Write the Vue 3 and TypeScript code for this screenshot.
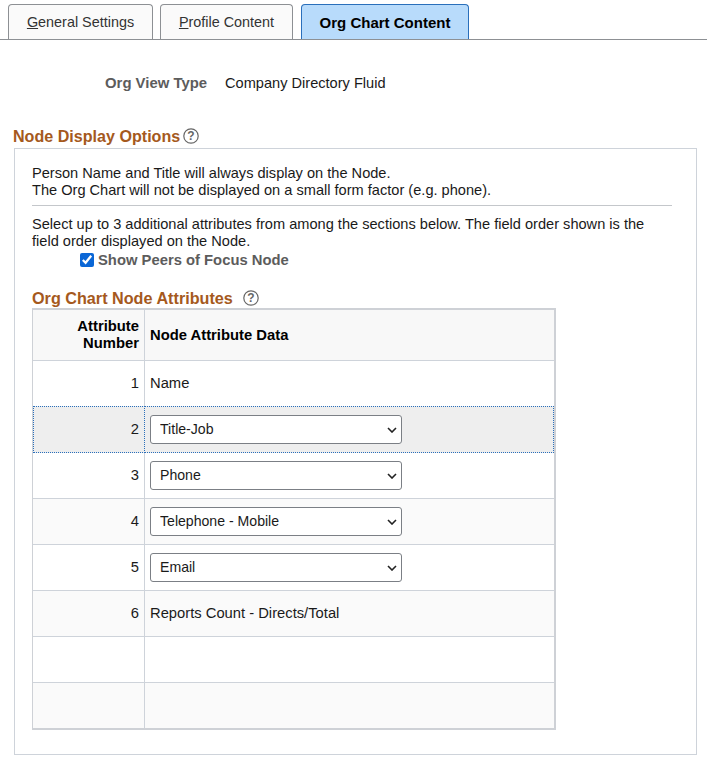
<script setup lang="ts">
interface Row { num: string; text?: string; select?: string }
const rows: Row[] = [
  { num: '1', text: 'Name' },
  { num: '2', select: 'Title-Job' },
  { num: '3', select: 'Phone' },
  { num: '4', select: 'Telephone - Mobile' },
  { num: '5', select: 'Email' },
  { num: '6', text: 'Reports Count - Directs/Total' },
  { num: '' },
  { num: '' },
]
const options = ['Title-Job', 'Phone', 'Telephone - Mobile', 'Email']
</script>

<template>
  <div class="page">
    <nav class="tabs">
      <div class="tab tab-1"><span><u>G</u>eneral Settings</span></div>
      <div class="tab tab-2"><span><u>P</u>rofile Content</span></div>
      <div class="tab tab-3 active"><span>Org Chart Content</span></div>
    </nav>

    <div class="view-row">
      <span class="view-label">Org View Type</span>
      <span class="view-value">Company Directory Fluid</span>
    </div>

    <h2 class="section-title">
      Node Display Options
      <svg class="help" viewBox="0 0 16 16" width="16" height="16">
        <circle cx="8" cy="8" r="7.2" fill="none" stroke="#666" stroke-width="1.2" />
        <text x="8" y="12" text-anchor="middle" class="help-q">?</text>
      </svg>
    </h2>

    <section class="box">
      <p class="para">Person Name and Title will always display on the Node.<br />The Org Chart will not be displayed on a small form factor (e.g. phone).</p>
      <hr class="rule" />
      <p class="para">Select up to 3 additional attributes from among the sections below. The field order shown is the field order displayed on the Node.</p>
      <label class="check-row">
        <input type="checkbox" class="check" checked />
        <span>Show Peers of Focus Node</span>
      </label>

      <h3 class="sub-title">
        Org Chart Node Attributes
        <svg class="help help-2" viewBox="0 0 16 16" width="16" height="16">
          <circle cx="8" cy="8" r="7.2" fill="none" stroke="#666" stroke-width="1.2" />
          <text x="8" y="12" text-anchor="middle" class="help-q">?</text>
        </svg>
      </h3>

      <table class="grid">
        <thead>
          <tr>
            <th class="col-num">Attribute<br />Number</th>
            <th class="col-data">Node Attribute Data</th>
          </tr>
        </thead>
        <tbody>
          <tr v-for="(row, i) in rows" :key="i" :class="{ odd: i % 2 === 1, focus: i === 1, 'before-focus': i === 0 }">
            <td class="col-num"><span class="cell-text">{{ row.num }}</span></td>
            <td class="col-data">
              <div v-if="row.select" class="select-wrap">
                <select class="select" :value="row.select">
                  <option v-for="o in options" :key="o" :value="o">{{ o }}</option>
                </select>
                <svg class="chevron" viewBox="0 0 10 6" width="10" height="6">
                  <path d="M1 1l4 4 4-4" fill="none" stroke="#222" stroke-width="1.6" />
                </svg>
              </div>
              <span v-else class="cell-text">{{ row.text }}</span>
            </td>
          </tr>
        </tbody>
      </table>
    </section>
  </div>
</template>

<style scoped>
.page {
  width: 707px;
  height: 762px;
  overflow: hidden;
  background: #fff;
  font-family: "Liberation Sans", Arial, sans-serif;
  font-size: 14.6px;
  color: #1a1a1a;
  box-sizing: border-box;
}
.tabs {
  display: flex;
  padding: 4px 0 0 8px;
  height: 35px;
  border-bottom: 1px solid #8d9094;
}
.tab {
  box-sizing: border-box;
  height: 35px;
  display: flex;
  align-items: center;
  justify-content: center;
  border: 1px solid #8d9094;
  border-bottom: 0;
  border-radius: 4px 4px 0 0;
  background: #fafafa;
  color: #333;
  font-size: 14.4px;
  margin-right: 7px;
}
.tab-1 { width: 145px; }
.tab-2 { width: 133px; margin-right: 8px; }
.tab-3 { width: 168px; }
.tab.active {
  background: #b8dbfb;
  border-color: #2a6fbb;
  color: #000;
  font-weight: 700;
  font-size: 15px;
}
.view-row {
  display: flex;
  height: 16px;
  line-height: 16px;
  margin-top: 35px;
  padding-left: 105px;
}
.view-label {
  width: 120px;
  font-weight: 700;
  font-size: 14.9px;
  color: #5c5c5c;
}
.section-title, .sub-title {
  margin: 0;
  font-size: 16.1px;
  font-weight: 700;
  line-height: 18px;
  color: #a5591d;
  display: flex;
  align-items: center;
}
.sub-title { font-size: 16.2px; }
.section-title {
  margin-top: 36px;
  padding-left: 13px;
}
.help { margin-left: 3px; flex: none; }
.help-2 { margin-left: 10px; }
.help-q {
  font-family: "Liberation Sans", Arial, sans-serif;
  font-size: 12px;
  fill: #666;
}
.box {
  box-sizing: border-box;
  margin: 3px 0 0 14px;
  width: 683px;
  height: 607px;
  border: 1px solid #ced3da;
  padding: 16px 24px 0 17px;
}
.para {
  margin: 0;
  line-height: 17px;
  color: #1a1a1a;
}
.rule {
  border: 0;
  border-top: 1px solid #c4c7cb;
  margin: 6px 0 10px;
}
.check-row {
  display: flex;
  align-items: center;
  height: 19px;
  margin-left: 46px;
  font-weight: 700;
  font-size: 14.8px;
  color: #5c5c5c;
}
.check {
  width: 14px;
  height: 14px;
  margin: 0 4px 0 2px;
  accent-color: #0b67d6;
}
.sub-title { margin-top: 20px; }
.grid {
  margin-top: 1px;
  border-collapse: separate;
  border-spacing: 0;
  table-layout: fixed;
  width: 524px;
  box-sizing: border-box;
  border: 2px solid #ced1d6;
  border-left-width: 1px;
  border-right-width: 2px;
}
.grid th, .grid td {
  padding: 0;
  border-bottom: 1px solid #ced3da;
  box-sizing: border-box;
  color: #1a1a1a;
  font-weight: 400;
}
.grid th {
  height: 51px;
  background: #f8f8f8;
  color: #000;
  font-weight: 700;
  font-size: 14.8px;
  line-height: 17px;
}
.grid td { height: 46px; }
.grid tr:last-child td { border-bottom: 0; height: 45px; }
.grid tr.before-focus td { border-bottom: 0; height: 45px; }
.cell-text {
  display: block;
  min-height: 17px;
  line-height: 17px;
  margin-bottom: 1px;
  font-size: 14.75px;
}
.col-num {
  width: 112px;
  text-align: right;
  padding-right: 5px !important;
  border-right: 1px solid #ced3da;
}
.col-data {
  text-align: left;
  padding-left: 5px !important;
}
.odd td { background: #fafafa; }
.grid .focus td {
  height: 47px;
  background: #eeeeee;
  border-top: 1px dotted #2a6fbb;
  border-bottom: 1px dotted #2a6fbb;
}
.focus td.col-num {
  border-left: 1px dotted #2a6fbb;
  border-right: 1px dotted #2a6fbb;
}
.focus td.col-data {
  border-right: 1px dotted #2a6fbb;
}
.select-wrap {
  position: relative;
  width: 252px;
  height: 29px;
}
.select {
  appearance: none;
  width: 252px;
  height: 29px;
  display: block;
  box-sizing: border-box;
  font-family: inherit;
  font-size: 14.1px;
  color: #1a1a1a;
  background: #fff;
  border: 1px solid #7b7f85;
  border-radius: 3px;
  padding: 0 9px 2px;
}
.chevron {
  position: absolute;
  right: 5px;
  top: 12px;
  pointer-events: none;
}
</style>
